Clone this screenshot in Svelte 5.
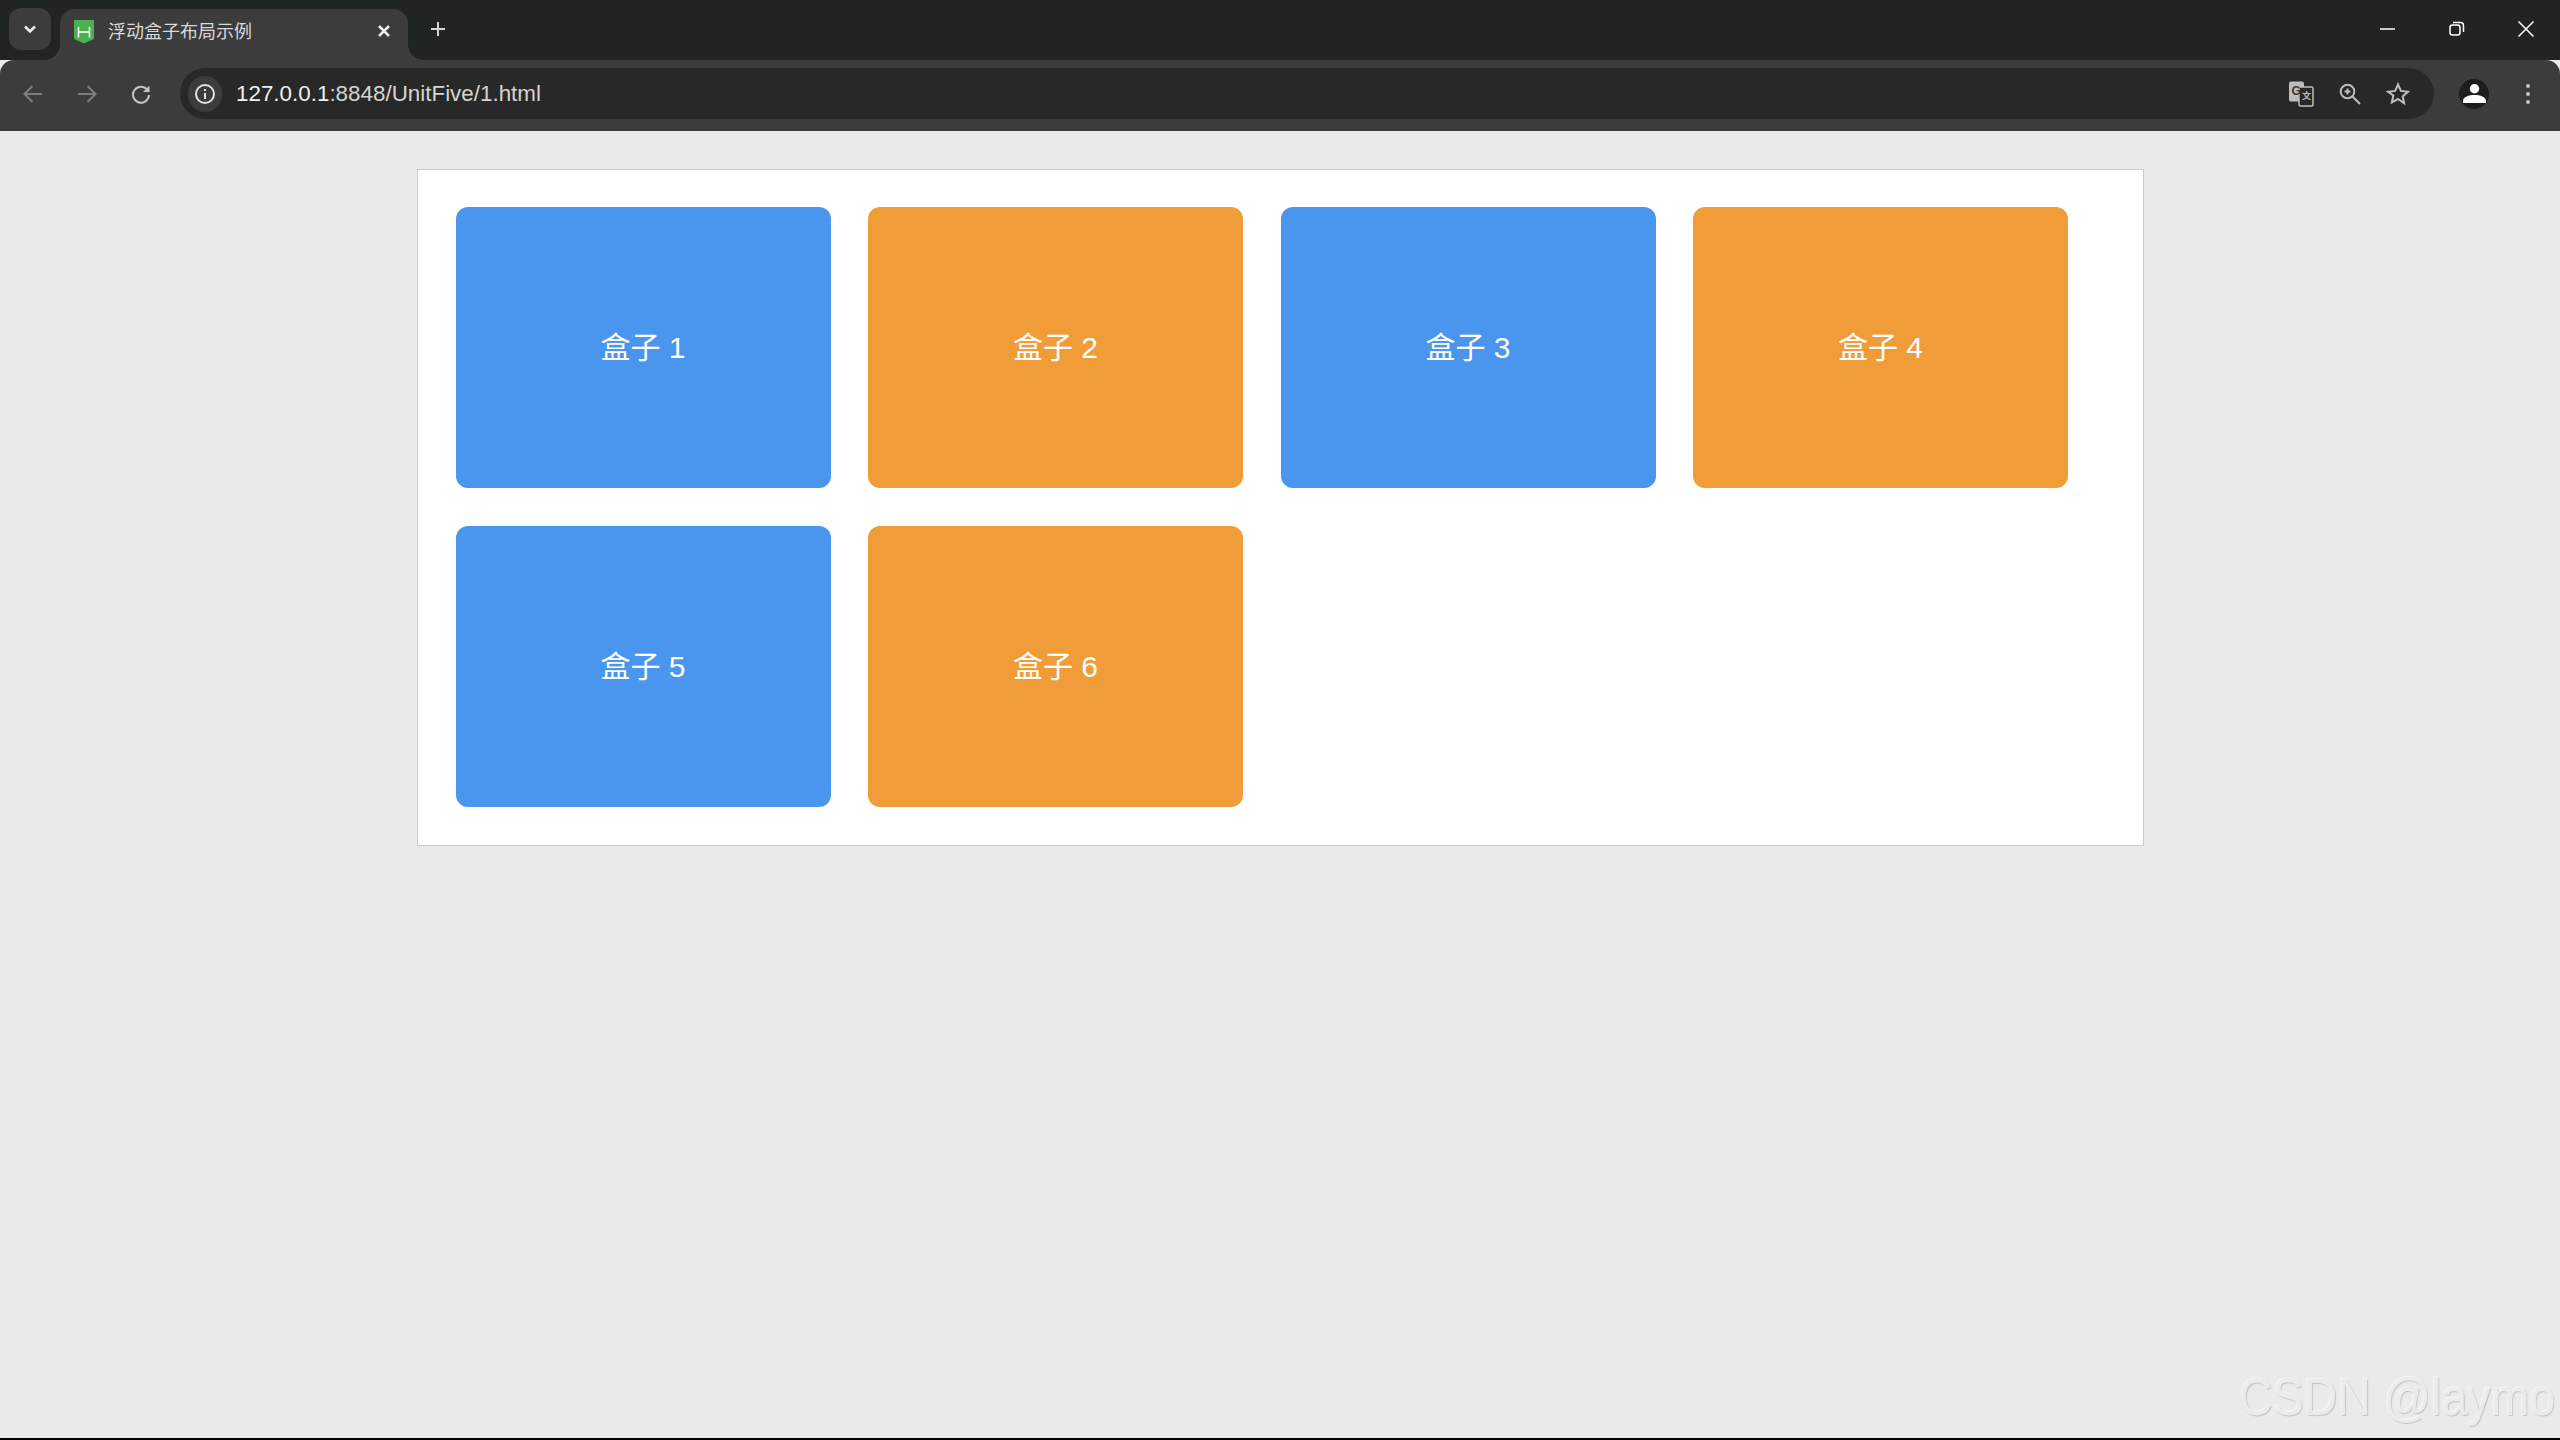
<script>
  const title = "浮动盒子布局示例";
  const host = "127.0.0.1";
  const rest = ":8848/UnitFive/1.html";
  const boxes = [1, 2, 3, 4, 5, 6];
</script>

<div class="window">
  <div class="tabstrip">
    <div class="tabsearch">
      <svg width="16" height="16" viewBox="0 0 16 16"><path d="M3 5.500 8 10.500l5-5" class="line white" /></svg>
    </div>
    <div class="tab">
      <svg class="favicon" width="20" height="24" viewBox="0 0 20 24">
        <path d="M0 0h20v19l-10 4.500-10-4.500z" fill="#4caf50" />
        <path d="M4.500 7v10.500M15.500 7v10.500M4.500 12h11" class="fav" />
      </svg>
      <span class="tabtitle">{title}</span>
      <svg class="tabclose" width="14" height="14" viewBox="0 0 14 14"><path d="M2 2l10 10M12 2 2 12" class="line white" /></svg>
    </div>
    <svg class="newtab" width="18" height="18" viewBox="0 0 18 18"><path d="M9 2v14M2 9h14" class="line" stroke="#d5d5d5" /></svg>
    <div class="controls">
      <svg width="16" height="16" viewBox="0 0 16 16"><path d="M0 8h15" class="thin" /></svg>
      <svg width="16" height="16" viewBox="0 0 16 16">
        <rect x="1" y="4" width="10" height="10" rx="2.500" class="thin" />
        <path d="M4 1.500h7.500A3 3 0 0 1 14.500 4.500V11" class="thin" />
      </svg>
      <svg width="16" height="16" viewBox="0 0 16 16"><path d="M0.500 0.500l15 15M15.500 0.500l-15 15" class="thin" /></svg>
    </div>
  </div>

  <div class="toolbar">
    <svg class="nav" width="20" height="20" viewBox="0 0 20 20"><path d="M19 10H1.500M9.500 2 1.500 10l8 8" class="line" stroke="#7d7d7d" /></svg>
    <svg class="nav fwd" width="20" height="20" viewBox="0 0 20 20"><path d="M1 10h17.500M10.500 2l8 8-8 8" class="line" stroke="#7d7d7d" /></svg>
    <svg class="nav reload" width="20" height="20" viewBox="0 0 20 20">
      <path d="M16.800 6.500A8 8 0 1 0 18 11" class="line" stroke="#c4c4c4" />
      <path d="M18.500 1.500v6.500h-6.500z" fill="#c4c4c4" />
    </svg>
    <div class="omnibox">
      <div class="chip">
        <svg width="22" height="22" viewBox="0 0 22 22">
          <circle cx="11" cy="11" r="9" fill="none" stroke="#e2e2e2" stroke-width="2" />
          <path d="M11 10v6M11 6v2" class="line" stroke="#e2e2e2" />
        </svg>
      </div>
      <span class="url"><span class="host">{host}</span>{rest}</span>
      <div class="omniicons">
        <svg width="26" height="26" viewBox="0 0 26 26">
          <rect x="1" y="0.500" width="15" height="20" rx="2" fill="#bdbdbd" />
          <rect x="11" y="6" width="14" height="19" rx="1.500" fill="#282828" stroke="#bdbdbd" stroke-width="1.500" />
          <text x="3.500" y="14" class="gt">G</text>
          <text x="14" y="18" class="gt small">文</text>
        </svg>
        <svg width="22" height="22" viewBox="0 0 22 22">
          <circle cx="8.500" cy="8.500" r="6.800" fill="none" stroke="#bdbdbd" stroke-width="2" />
          <path d="M13.500 13.500 21 21M5.500 8.500h6M8.500 5.500v6" class="line" stroke="#bdbdbd" />
        </svg>
        <svg width="24" height="24" viewBox="0 0 24 24">
          <path d="M12 2.500l2.900 6.400 7 .8-5.200 4.700 1.400 6.900L12 17l-6.100 3.300 1.400-6.900L2.100 9.700l7-.8z" fill="none" stroke="#bdbdbd" stroke-width="2" />
        </svg>
      </div>
    </div>
    <div class="avatar">
      <svg width="24" height="20" viewBox="0 0 24 20">
        <circle cx="12" cy="5" r="5" fill="#fff" />
        <path d="M0 20v-2.500C0 13.500 6 11.500 12 11.500s12 2 12 6V20z" fill="#fff" />
      </svg>
    </div>
    <div class="dots"><i></i><i></i><i></i></div>
  </div>

  <main class="page">
    <section class="panel">
      {#each boxes as n}
        <div class="box" class:even={n % 2 === 0}>盒子 {n}</div>
      {/each}
    </section>
  </main>

  <div class="watermark">CSDN @laymo</div>
</div>

<style>
  :global(body) {
    margin: 0;
  }

  .window {
    position: relative;
    display: flex;
    flex-direction: column;
    height: 1440px;
    box-sizing: border-box;
    border-bottom: 2px solid #000;
    background: #eaeaea;
    font-family: "Liberation Sans", "Noto Sans CJK SC", sans-serif;
    overflow: hidden;
  }

  .line {
    fill: none;
    stroke-width: 2;
  }

  .white {
    stroke: #eee;
    stroke-width: 2.5;
  }

  .fav {
    fill: none;
    stroke: #fff;
    stroke-width: 1.5;
  }

  .thin {
    fill: none;
    stroke: #fff;
    stroke-width: 1.5;
  }

  /* tab strip */
  .tabstrip {
    display: flex;
    align-items: center;
    height: 60px;
    flex: none;
    background: #202423;
  }

  .tabsearch {
    display: flex;
    align-items: center;
    justify-content: center;
    width: 42px;
    height: 42px;
    margin-left: 9px;
    margin-top: -3px;
    border-radius: 12px;
    background: #3c3c3c;
  }

  .tab {
    position: relative;
    display: flex;
    align-items: center;
    align-self: flex-end;
    box-sizing: border-box;
    width: 348px;
    height: 51px;
    margin-left: 9px;
    padding: 0 17px 6px 14px;
    border-radius: 15px 15px 0 0;
    background: #3c3c3c;
  }

  .tab::before,
  .tab::after {
    content: "";
    position: absolute;
    bottom: 0;
    width: 15px;
    height: 15px;
  }

  .tab::before {
    left: -15px;
    background: radial-gradient(circle at 0 0, transparent 14.5px, #3c3c3c 15px);
  }

  .tab::after {
    right: -15px;
    background: radial-gradient(circle at 100% 0, transparent 14.5px, #3c3c3c 15px);
  }

  .favicon {
    flex: none;
  }

  .tabtitle {
    margin-left: 14px;
    margin-top: -3px;
    font-size: 18px;
    color: #d8d8d8;
  }

  .tabclose {
    margin-left: auto;
    margin-top: -2px;
  }

  .newtab {
    margin-left: 21px;
    margin-top: -2px;
  }

  .controls {
    display: flex;
    align-items: center;
    gap: 53px;
    margin-left: auto;
    margin-right: 26px;
    margin-top: -2px;
  }

  .controls svg:first-child {
    margin-right: 1px;
    transform: translateX(1px);
  }

  /* toolbar */
  .toolbar {
    display: flex;
    align-items: center;
    flex: none;
    box-sizing: border-box;
    height: 71px;
    padding-bottom: 2px;
    border-bottom: 2px solid #383838;
    border-radius: 14px 14px 0 0;
    background: #3c3c3c;
  }

  .nav {
    flex: none;
    margin-left: 23px;
  }

  .fwd {
    margin-left: 34px;
  }

  .reload {
    margin-left: 34px;
  }

  .omnibox {
    display: flex;
    align-items: center;
    box-sizing: border-box;
    width: 2254px;
    height: 51px;
    margin-left: 29px;
    padding: 0 24px 0 8px;
    border-radius: 26px;
    background: #282828;
  }

  .chip {
    display: flex;
    align-items: center;
    justify-content: center;
    width: 34px;
    height: 36px;
    border-radius: 18px;
    background: #3c3c3c;
  }

  .url {
    margin-left: 14px;
    padding-top: 1px;
    font-size: 22.4px;
    color: #d4d4d4;
  }

  .host {
    color: #f0f0f0;
  }

  .omniicons {
    display: flex;
    align-items: center;
    gap: 25px;
    margin-left: auto;
  }

  .gt {
    font-size: 12px;
    font-weight: 700;
    fill: #3c3c3c;
  }

  .gt.small {
    font-size: 9px;
    fill: #bdbdbd;
  }

  .avatar {
    display: flex;
    align-items: center;
    justify-content: center;
    width: 30px;
    height: 30px;
    margin-left: 25px;
    border-radius: 50%;
    background: #1d1d1d;
  }

  .avatar svg {
    width: 23px;
    height: 19px;
  }

  .dots {
    display: flex;
    flex-direction: column;
    gap: 4px;
    margin-left: 37px;
  }

  .dots i {
    display: block;
    width: 4px;
    height: 4px;
    border-radius: 50%;
    background: #c4c4c4;
  }

  /* page */
  .page {
    flex: 1;
    padding-top: 38px;
  }

  .panel {
    display: flex;
    flex-wrap: wrap;
    gap: 38px 37.5px;
    box-sizing: border-box;
    width: 1727px;
    margin: 0 auto;
    padding: 37px 38px 38px;
    border: 1px solid #ccc;
    background: #fff;
  }

  .box {
    display: flex;
    align-items: center;
    justify-content: center;
    box-sizing: border-box;
    width: 375px;
    height: 281px;
    padding-bottom: 6px;
    border-radius: 12px;
    background: #4a95ed;
    color: #fff;
    font-size: 30px;
  }

  .box.even {
    background: #f09c38;
  }

  .watermark {
    position: absolute;
    right: 5px;
    bottom: 11px;
    font-size: 52px;
    line-height: 60px;
    color: #ebebeb;
    text-shadow: 1px 1px 1px #c2c2c2, -1px -1px 1px #f6f6f6;
    white-space: nowrap;
    transform: scaleX(0.895);
    transform-origin: right center;
  }
</style>
